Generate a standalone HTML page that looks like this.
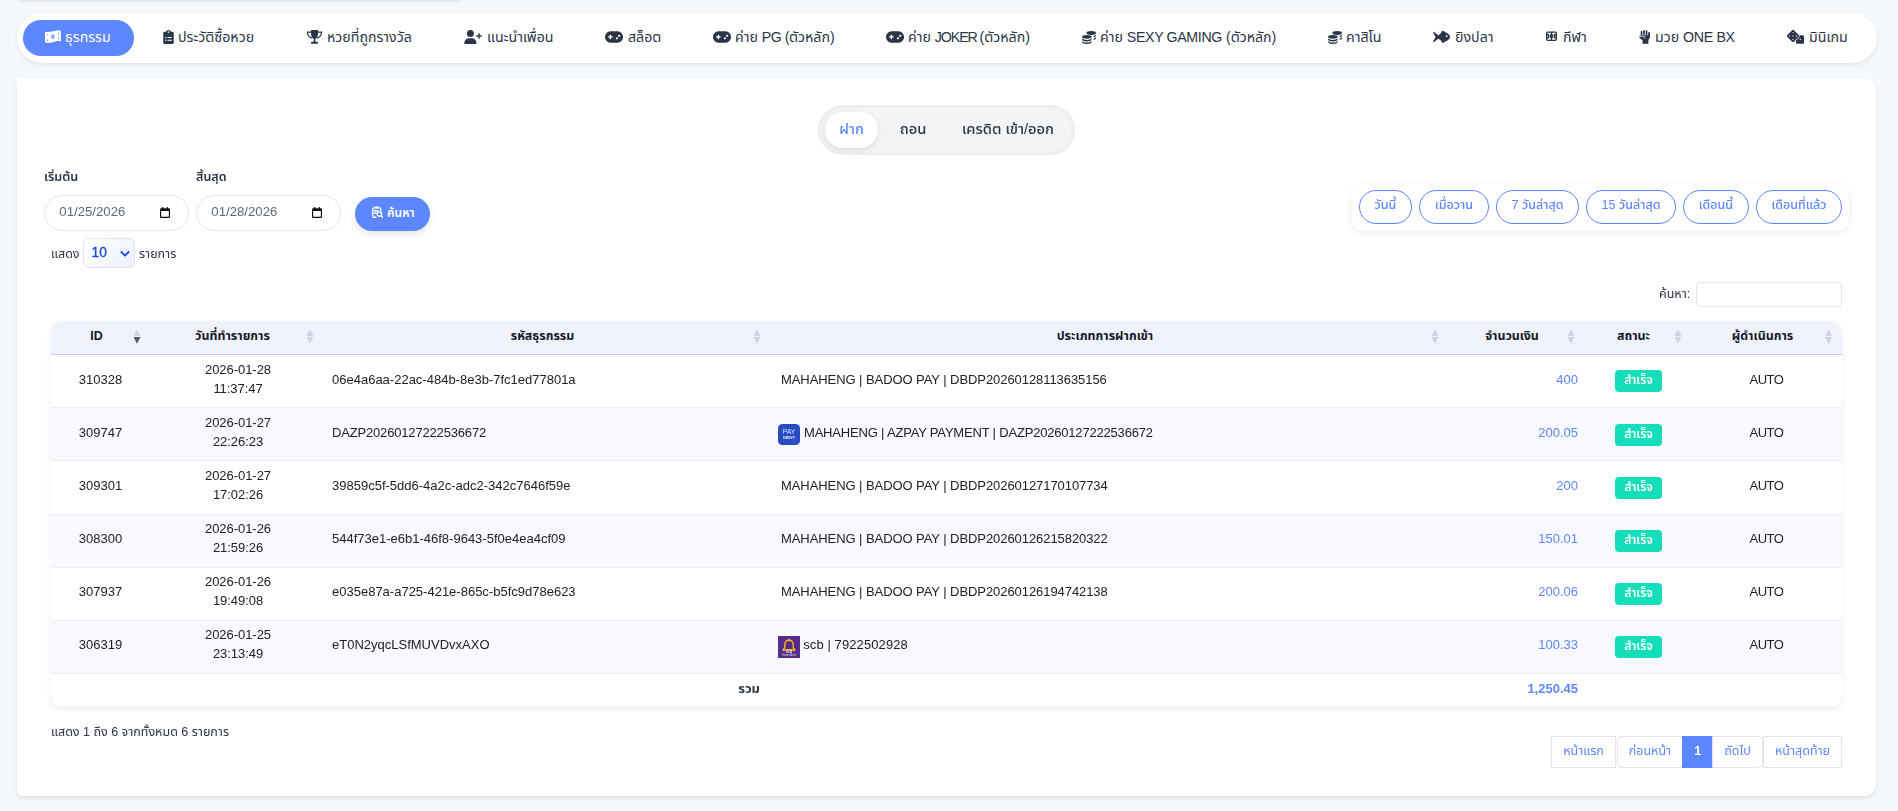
<!DOCTYPE html>
<html lang="th">
<head>
<meta charset="utf-8">
<title>ธุรกรรม</title>
<style>
*{box-sizing:border-box}
html,body{margin:0;padding:0}
body{width:1898px;height:811px;overflow:hidden;background:#f5f8fb;color:#2a3547;
  font-family:"Liberation Sans","Noto Sans Thai","Noto Sans Thai UI","Loma",sans-serif;font-size:13px;position:relative}
.abs{position:absolute}
.tabs,.lbl,.small,.quick,.pg,.date,.sel,.tb2{will-change:transform}
/* top sliver */
.sliver{left:17px;top:-12px;width:445px;height:12px;background:#fff;border-radius:0 0 4px 4px;box-shadow:0 1px 3px rgba(60,80,110,.14)}
/* nav */
.nav{left:17px;top:13px;width:1860px;height:50px;background:#fff;border-radius:25px;box-shadow:0 2px 4px rgba(55,70,85,.11)}
.nav .it{position:absolute;top:7px;height:36px;line-height:34px;padding-bottom:2px;font-size:14.2px;color:#2a3547;white-space:nowrap;display:flex;align-items:center}
.nav .it b{font-weight:400}
.nav .it svg{display:block;margin-right:4px;flex:none}
.nav .it.act{background:#5d87ff;color:#fff;border-radius:18px;left:6px;width:111px;padding-left:21px}
/* card */
.card{left:17px;top:78px;width:1859px;height:718px;background:#fff;border-radius:0 12px 12px 5px;box-shadow:0 2px 4px rgba(55,70,85,.12)}
/* tabs */
.tabs{left:818px;top:105px;width:257px;height:50px;border-radius:25px;background:#f3f4f6;box-shadow:inset 0 0 5px rgba(40,50,70,.10)}
.tabs span{position:absolute;top:7px;height:36px;line-height:35px;font-size:14.7px;font-weight:500;color:#2a3547;text-align:center;white-space:nowrap}
.tabs .on{left:7px;width:53px;background:#fff;border-radius:18px;color:#5d87ff;box-shadow:0 2px 5px rgba(40,50,70,.12)}
/* filters */
.lbl{font-size:12.5px;font-weight:600;color:#2a3547;white-space:nowrap;line-height:16px}
.date{height:36px;width:144.5px;border:1px solid #dfe5ef;border-radius:18px;background:#fff;color:#5a6a85;font-size:13.2px;line-height:32px;padding-left:14.3px;white-space:nowrap}
.date svg{position:absolute;right:17.7px;top:11px}
.btn-s{left:355px;top:197px;width:75px;height:34px;border-radius:17px;background:#5d87ff;color:#fff;font-size:12px;font-weight:600;line-height:33px;white-space:nowrap;box-shadow:0 3px 6px rgba(40,50,70,.13)}
.sel{left:83.2px;top:238px;width:51.7px;height:29.6px;border:1px solid #dfe4f3;border-radius:5px;background:linear-gradient(135deg,#fff 10%,#eef1fd 90%);color:#1d4ed8;font-size:13.8px;-webkit-text-stroke:.35px #1d4ed8;line-height:28px;padding-left:7.5px}
.small{font-size:12.5px;color:#2a3547;white-space:nowrap;line-height:16px}
/* quick */
.quick{left:1352px;top:184px;width:497px;height:47px;border-radius:12px;background:#fff;box-shadow:0 2px 6px rgba(55,70,85,.10)}
.quick span{position:absolute;top:6px;height:34px;line-height:29px;border:1px solid #5d87ff;border-radius:17px;color:#5d87ff;font-size:12.5px;font-weight:500;text-align:center;white-space:nowrap;background:#fff}
.srch{left:1696px;top:282px;width:146px;height:25px;border:1px solid #dfe5ef;border-radius:4px;background:#fff}
/* table */
.tw{left:51px;top:321px;width:1791px;height:386px;border-radius:12px 12px 10px 10px;overflow:hidden;background:#fff;box-shadow:0 2px 5px rgba(90,106,133,.12)}
table{border-collapse:separate;border-spacing:0;table-layout:fixed;width:1791px;font-size:13px;color:#232021}
th{height:33px;background:#f0f3fe;font-weight:700;font-size:12.4px;line-height:19px;color:#111827;text-align:center;vertical-align:top;padding:6px 28px 0 20px;position:relative;white-space:nowrap}
th i{position:absolute;right:9.5px;top:8.4px;width:7px;height:16px}
th:last-child i{right:10px}
th i:before,th i:after{content:"";position:absolute;left:0;width:7px;background:#cfd1e0}
th i:before{top:0;height:6.4px;clip-path:polygon(50% 0,100% 100%,0 100%)}
th i:after{top:7.6px;height:6.8px;clip-path:polygon(0 0,100% 0,50% 100%)}
th i.d:after{background:#5a5c66}
td{height:53px;padding:15px 10px 0;border-top:1px solid #ebeef5;vertical-align:top;line-height:19px;white-space:nowrap}
tbody tr:first-child td{border-top-color:#c5cde6}
tbody tr:nth-child(even) td{background:#f8f9fe}
tr.h54 td{height:54px}
tr.up td{padding-top:14px}
td.c{text-align:center}
td.d{padding:5px 8px 0 11px;letter-spacing:-.05px}
tr.up td.d{padding-top:4px}
td.k{padding-left:9px}
td.t{padding-left:11px;letter-spacing:-.07px}
td.a{letter-spacing:-.5px}
td.r{text-align:right;color:#5d87ff;padding-right:6px}
td.b{padding-top:15px}
tr.p16 td.b{padding-top:16px}
tr.up td.b{padding-top:15px}
.bdg{display:block;margin:0 auto;width:47px;height:21.6px;line-height:21px;border-radius:4px;background:#13deb9;color:#fff;font-weight:600;font-size:12px;text-align:center;position:relative;left:1px}
tfoot td{color:#2a3547;height:34px;padding-top:5px;font-weight:700}
.logo{position:absolute;display:block}
td.lg{position:relative;padding-left:33.2px}
/* pagination */
.pg{top:736px;height:32px;line-height:28px;border:1px solid #dfe5ef;background:#fff;color:#5d87ff;font-size:12.5px;text-align:center;white-space:nowrap}
</style>
</head>
<body>
<div class="abs sliver"></div>
<div class="abs nav">
 <div class="it act"><svg width="17" height="14" viewBox="0 0 17 14"><path fill="#fff" d="M1 2.200C3 1.900 5.500 2.300 8 1.600S13-.2 16.900.8v10.600C13.500 10.600 11.500 11.600 9 12.200s-5 .7-8 .3z"/><ellipse cx="8.900" cy="6.500" rx="1.700" ry="2.300" fill="#5d87ff"/><ellipse cx="8.900" cy="6.500" rx=".55" ry="1.150" fill="#fff"/><circle cx="3.200" cy="4.800" r=".65" fill="#5d87ff"/><circle cx="14.500" cy="3.200" r=".65" fill="#5d87ff"/><circle cx="3.300" cy="10.200" r=".65" fill="#5d87ff"/><circle cx="14.500" cy="8.700" r=".65" fill="#5d87ff"/></svg><span>ธุรกรรม</span></div>
 <div class="it" style="left:146px"><svg width="11" height="14" viewBox="0 0 384 512"><path fill="#2a3547" d="M192 0c-42 0-77 27-90 64H48C21 64 0 85 0 112v352c0 27 21 48 48 48h288c27 0 48-21 48-48V112c0-27-21-48-48-48h-54C269 27 234 0 192 0z"/><circle cx="192" cy="80" r="30" fill="#fff"/><circle cx="96" cy="272" r="26" fill="#fff"/><circle cx="96" cy="376" r="26" fill="#fff"/><rect x="152" y="254" width="168" height="36" rx="18" fill="#fff"/><rect x="152" y="358" width="168" height="36" rx="18" fill="#fff"/></svg><span>ประวัติซื้อหวย</span></div>
 <div class="it" style="left:289px"><svg width="17" height="14" viewBox="0 0 576 512"><path fill="#2a3547" d="M158 24c0-14 10-24 24-24h212c14 0 24 10 24 24v72c0 130-52 220-130 244-78-24-130-114-130-244z"/><path fill="none" stroke="#2a3547" stroke-width="44" d="M160 74H30c0 112 62 192 168 224M416 74h130c0 112-62 192-168 224"/><rect x="256" y="320" width="64" height="120" fill="#2a3547"/><rect x="160" y="432" width="256" height="72" rx="28" fill="#2a3547"/></svg><span>หวยที่ถูกรางวัล</span></div>
 <div class="it" style="left:447px"><svg width="18" height="14" viewBox="0 0 640 512"><circle cx="224" cy="128" r="128" fill="#2a3547"/><path fill="#2a3547" d="M0 482c0-98 80-178 178-178h92c98 0 178 80 178 178 0 16-14 30-30 30H30c-16 0-30-14-30-30z"/><rect x="443" y="193" width="197" height="52" rx="10" fill="#2a3547"/><rect x="515" y="121" width="52" height="197" rx="10" fill="#2a3547"/></svg><span style="margin-left:1px">แนะนำเพื่อน</span></div>
 <div class="it" style="left:588px"><svg width="18" height="14" viewBox="0 0 640 498"><rect x="0" y="48" width="640" height="402" rx="190" fill="#2a3547"/><rect x="112" y="226" width="160" height="46" rx="20" fill="#fff"/><rect x="169" y="169" width="46" height="160" rx="20" fill="#fff"/><circle cx="424" cy="296" r="40" fill="#fff"/><circle cx="504" cy="208" r="40" fill="#fff"/></svg><span style="margin-left:1px">สล็อต</span></div>
 <div class="it" style="left:696px"><svg width="18" height="14" viewBox="0 0 640 498"><rect x="0" y="48" width="640" height="402" rx="190" fill="#2a3547"/><rect x="112" y="226" width="160" height="46" rx="20" fill="#fff"/><rect x="169" y="169" width="46" height="160" rx="20" fill="#fff"/><circle cx="424" cy="296" r="40" fill="#fff"/><circle cx="504" cy="208" r="40" fill="#fff"/></svg><span>ค่าย <b class="en" style="letter-spacing:-.5px">PG (</b>ตัวหลัก)</span></div>
 <div class="it" style="left:869px"><svg width="18" height="14" viewBox="0 0 640 498"><rect x="0" y="48" width="640" height="402" rx="190" fill="#2a3547"/><rect x="112" y="226" width="160" height="46" rx="20" fill="#fff"/><rect x="169" y="169" width="46" height="160" rx="20" fill="#fff"/><circle cx="424" cy="296" r="40" fill="#fff"/><circle cx="504" cy="208" r="40" fill="#fff"/></svg><span>ค่าย <b class="en" style="letter-spacing:-1.1px">JOKER </b>(ตัวหลัก)</span></div>
 <div class="it" style="left:1064px"><svg width="14" height="13" style="margin-left:1px" viewBox="0 0 512 480"><g fill="#2a3547"><ellipse cx="336" cy="72" rx="176" ry="72"/><path d="M512 130v40c0 26-30 50-80 62v-52c36-10 64-28 80-50z"/><path d="M512 226v40c0 26-30 50-80 62v-52c36-10 64-28 80-50z"/><ellipse cx="176" cy="216" rx="176" ry="72"/><path d="M0 272c30 40 100 60 176 60s146-20 176-60v44c0 40-78 72-176 72S0 356 0 316z"/><path d="M0 366c30 40 100 60 176 60s146-20 176-60v42c0 40-78 72-176 72S0 448 0 408z"/></g></svg><span>ค่าย <b class="en" style="letter-spacing:-.36px">SEXY GAMING</b> (ตัวหลัก)</span></div>
 <div class="it" style="left:1310px"><svg width="14" height="13" style="margin-left:1px" viewBox="0 0 512 480"><g fill="#2a3547"><ellipse cx="336" cy="72" rx="176" ry="72"/><path d="M512 130v40c0 26-30 50-80 62v-52c36-10 64-28 80-50z"/><path d="M512 226v40c0 26-30 50-80 62v-52c36-10 64-28 80-50z"/><ellipse cx="176" cy="216" rx="176" ry="72"/><path d="M0 272c30 40 100 60 176 60s146-20 176-60v44c0 40-78 72-176 72S0 356 0 316z"/><path d="M0 366c30 40 100 60 176 60s146-20 176-60v42c0 40-78 72-176 72S0 448 0 408z"/></g></svg><span>คาสิโน</span></div>
 <div class="it" style="left:1416px"><svg width="17" height="14" viewBox="0 0 17 14"><g fill="#2a3547"><path d="M.2 2.700c-.3-.6.400-1.100.9-.7L6.300 6.100v1.800L1.100 12c-.5.400-1.200-.1-.9-.7L2.600 7z"/><path d="M4.500 7C6 3.900 8.800 2.600 11.300 2.600 14.600 2.600 17 5.400 17 7s-2.400 4.400-5.700 4.400C8.800 11.400 6 10.100 4.500 7z"/><path d="M7.500 3.500L9.300.8c1.500.2 2.900 1 3.700 2.300zM8 10.600l1.500 2.500c1.100-.2 2-.9 2.600-1.900z"/></g><circle cx="13.700" cy="6.200" r=".9" fill="#fff"/></svg><span style="margin-left:1px">ยิงปลา</span></div>
 <div class="it" style="left:1528px"><svg width="13" height="14" viewBox="0 0 13 14" style="margin-right:5px"><g fill="none" stroke="#2a3547" stroke-width="1.300"><rect x="1.650" y="2.150" width="9.700" height="8.200" rx="1"/><path d="M6.500 2.100v8.300M1.600 4.700h1.700v3.100H1.600M11.400 4.700H9.700v3.100h1.700"/><circle cx="6.500" cy="6.250" r="1.500"/></g></svg><span>กีฬา</span></div>
 <div class="it" style="left:1622px"><svg width="12" height="14" viewBox="0 0 12 14"><g fill="#2a3547"><rect x="1.700" y=".9" width="1.700" height="4.500" rx=".8"/><rect x="4.150" y="0" width="1.700" height="5" rx=".8"/><rect x="6.700" y=".3" width="1.700" height="5" rx=".8"/><rect x="9.150" y="1.900" width="1.850" height="6" rx=".9"/><path d="M2.200 5.300h8.200V8c0 1-.5 1.600-1.100 1.900H3.500C1.900 9.500.4 8.100.4 6.700c0-.9.700-1.300 1.800-1.400z"/><rect x="3.500" y="9.500" width="5.900" height="4.300" rx=".4"/></g><path d="M.8 6.600c1.600-.5 3.900-.4 4.700 0 .8.500.5 1.600-.6 1.900" fill="none" stroke="#fff" stroke-width=".75"/></svg><span>มวย <b class="en" style="letter-spacing:-.33px">ONE BX</b></span></div>
 <div class="it" style="left:1770px"><svg width="18" height="14" viewBox="0 0 18 14" style="overflow:visible"><rect x="8.800" y="5.300" width="8.300" height="8.500" rx="1.500" fill="#2a3547"/><rect x="1.300" y="1.200" width="9.400" height="9.400" rx="1.600" transform="rotate(45 6 5.900)" fill="#2a3547" stroke="#fff" stroke-width="1.300" paint-order="stroke"/><g fill="#fff"><circle cx="6" cy="2.500" r=".62"/><circle cx="2.600" cy="5.900" r=".62"/><circle cx="6" cy="5.900" r=".62"/><circle cx="9.400" cy="5.900" r=".62"/><circle cx="6" cy="9.300" r=".62"/><circle cx="13.300" cy="9.400" r=".7"/></g></svg><span>มินิเกม</span></div>
</div>
<div class="abs card"></div>
<div class="abs tabs"><span class="on">ฝาก</span><span style="left:67px;width:56px">ถอน</span><span style="left:130px;width:120px">เครดิต เข้า/ออก</span></div>

<div class="abs lbl" style="left:44px;top:169px">เริ่มต้น</div>
<div class="abs lbl" style="left:196px;top:169px">สิ้นสุด</div>
<div class="abs date" style="left:44px;top:195px">01/25/2026<svg width="10" height="11" viewBox="0 0 12 13"><path fill="#111" d="M2.6 0h1.5v1.4h3.8V0h1.5v1.4h1.1c.8 0 1.5.7 1.5 1.5v8.6c0 .8-.7 1.5-1.500 1.500h-9c-.8 0-1.500-.7-1.500-1.500V2.900c0-.8.7-1.500 1.500-1.500h1.100zM1.400 4.800v6.700h9.200V4.800z"/></svg></div>
<div class="abs date" style="left:196px;top:195px">01/28/2026<svg width="10" height="11" viewBox="0 0 12 13"><path fill="#111" d="M2.6 0h1.5v1.4h3.8V0h1.5v1.4h1.1c.8 0 1.5.7 1.5 1.5v8.6c0 .8-.7 1.5-1.500 1.500h-9c-.8 0-1.500-.7-1.500-1.500V2.900c0-.8.7-1.500 1.500-1.500h1.100zM1.400 4.800v6.700h9.200V4.800z"/></svg></div>
<div class="abs btn-s"><svg class="abs" style="left:16.5px;top:9px" width="11.500" height="12" viewBox="0 0 11.500 12"><g fill="none" stroke="#fff" stroke-width="1.350"><path d="M4.200 11.200H1.900c-.6 0-1.100-.5-1.100-1.100V2.900c0-.6.500-1.100 1.100-1.100h5.700c.6 0 1.100.5 1.100 1.100v1.800"/><circle cx="7.400" cy="8" r="2.250"/><path d="M9.100 9.800l1.900 1.900M2.600 4.700h3.200M2.600 7h1.500" stroke-linecap="round"/></g><rect x="3" y=".2" width="3.500" height="2.300" rx=".9" fill="#fff"/></svg><span class="abs" style="left:32px;top:0">ค้นหา</span></div>

<div class="abs small" style="left:51px;top:246px">แสดง</div>
<div class="abs sel">10<svg class="abs" style="right:3.7px;top:10.5px" width="10" height="8" viewBox="0 0 11 8"><path d="M1.500 1.800l4 4 4-4" fill="none" stroke="#1d4ed8" stroke-width="2" stroke-linecap="round" stroke-linejoin="round"/></svg></div>
<div class="abs small" style="left:138.5px;top:246px">รายการ</div>

<div class="abs quick">
 <span style="left:7px;width:53px">วันนี้</span>
 <span style="left:67px;width:70px">เมื่อวาน</span>
 <span style="left:144px;width:83px">7 วันล่าสุด</span>
 <span style="left:234px;width:90px">15 วันล่าสุด</span>
 <span style="left:331px;width:66px">เดือนนี้</span>
 <span style="left:404px;width:86px">เดือนที่แล้ว</span>
</div>

<div class="abs small" style="left:1658.5px;top:286px">ค้นหา:</div>
<div class="abs srch"></div>

<div class="abs tw">
<table>
<colgroup><col style="width:99px"><col style="width:173px"><col style="width:447px"><col style="width:678px"><col style="width:136px"><col style="width:107px"><col style="width:151px"></colgroup>
<thead><tr><th>ID<i class="d"></i></th><th>วันที่ทำรายการ<i></i></th><th>รหัสธุรกรรม<i></i></th><th>ประเภทการฝากเข้า<i></i></th><th>จำนวนเงิน<i></i></th><th>สถานะ<i></i></th><th>ผู้ดำเนินการ<i></i></th></tr></thead>
</table>
<table class="tb2">
<colgroup><col style="width:99px"><col style="width:173px"><col style="width:447px"><col style="width:678px"><col style="width:136px"><col style="width:107px"><col style="width:151px"></colgroup>
<tbody>
<tr><td class="c">310328</td><td class="c d">2026-01-28<br>11:37:47</td><td class="k">06e4a6aa-22ac-484b-8e3b-7fc1ed77801a</td><td class="t">MAHAHENG | BADOO PAY | DBDP20260128113635156</td><td class="r">400</td><td class="c b"><span class="bdg">สำเร็จ</span></td><td class="c a">AUTO</td></tr>
<tr class="p16"><td class="c">309747</td><td class="c d">2026-01-27<br>22:26:23</td><td class="k" style="letter-spacing:-.17px">DAZP20260127222536672</td><td class="t lg" style="letter-spacing:-.19px;padding-left:34px"><svg class="logo" style="left:8px;top:16px" width="22" height="21" preserveAspectRatio="none" viewBox="0 0 22 22"><rect width="22" height="22" rx="4.500" fill="#254cc0"/><text x="11" y="10.500" font-size="7" font-family="Liberation Sans,sans-serif" fill="#dfe6ff" text-anchor="middle">PAY</text><text x="11" y="16" font-size="4.500" font-weight="700" font-family="Liberation Sans,sans-serif" fill="#dfe6ff" text-anchor="middle">MENT</text></svg>MAHAHENG | AZPAY PAYMENT | DAZP20260127222536672</td><td class="r">200.05</td><td class="c b"><span class="bdg">สำเร็จ</span></td><td class="c a">AUTO</td></tr>
<tr class="h54 p16"><td class="c">309301</td><td class="c d">2026-01-27<br>17:02:26</td><td class="k">39859c5f-5dd6-4a2c-adc2-342c7646f59e</td><td class="t">MAHAHENG | BADOO PAY | DBDP20260127170107734</td><td class="r">200</td><td class="c b"><span class="bdg">สำเร็จ</span></td><td class="c a">AUTO</td></tr>
<tr class="up"><td class="c">308300</td><td class="c d">2026-01-26<br>21:59:26</td><td class="k">544f73e1-e6b1-46f8-9643-5f0e4ea4cf09</td><td class="t">MAHAHENG | BADOO PAY | DBDP20260126215820322</td><td class="r">150.01</td><td class="c b"><span class="bdg">สำเร็จ</span></td><td class="c a">AUTO</td></tr>
<tr class="up"><td class="c">307937</td><td class="c d">2026-01-26<br>19:49:08</td><td class="k">e035e87a-a725-421e-865c-b5fc9d78e623</td><td class="t">MAHAHENG | BADOO PAY | DBDP20260126194742138</td><td class="r">200.06</td><td class="c b"><span class="bdg">สำเร็จ</span></td><td class="c a">AUTO</td></tr>
<tr class="up"><td class="c">306319</td><td class="c d">2026-01-25<br>23:13:49</td><td class="k">eT0N2yqcLSfMUVDvxAXO</td><td class="t lg" style="letter-spacing:.1px"><svg class="logo" style="left:8px;top:15px" width="22" height="22" viewBox="0 0 22 22"><rect width="22" height="22" fill="#542c8c"/><path d="M11 4.300c-2.700 0-4.200 2.300-4.200 4.900 0 1.500.3 2.300-.3 3.100-.6.700-1.300.8-1.300 1.500 0 .6.600.9 1.200.7.700-.2 1-.8 1-.8h7.200s.3.600 1 .8c.6.200 1.200-.1 1.200-.7 0-.7-.7-.8-1.300-1.500-.6-.8-.3-1.600-.3-3.100 0-2.600-1.500-4.900-4.200-4.900z" fill="none" stroke="#fdb515" stroke-width="1.400" stroke-linejoin="round"/><circle cx="11" cy="3.600" r=".9" fill="#fdb515"/><text x="11" y="17.300" font-size="2.800" font-weight="700" font-family="Liberation Sans,sans-serif" fill="#fff" text-anchor="middle">SCB</text><text x="11" y="20.400" font-size="2.800" font-family="Liberation Sans,Noto Sans Thai,sans-serif" fill="#e9def7" text-anchor="middle">ไทยพาณิชย์</text></svg>scb | 7922502928</td><td class="r">100.33</td><td class="c b"><span class="bdg">สำเร็จ</span></td><td class="c a">AUTO</td></tr>
</tbody>
<tfoot><tr><td colspan="3" style="text-align:right">รวม</td><td></td><td class="r">1,250.45</td><td></td><td></td></tr></tfoot>
</table>
</div>

<div class="abs small" style="left:51px;top:724px">แสดง 1 ถึง 6 จากทั้งหมด 6 รายการ</div>
<div class="abs pg" style="left:1551px;width:65px">หน้าแรก</div>
<div class="abs pg" style="left:1616.7px;width:66px;border-radius:5px 0 0 5px">ก่อนหน้า</div>
<div class="abs pg" style="left:1682px;width:31.5px;background:#5d87ff;border-color:#5d87ff;color:#fff;font-weight:600">1</div>
<div class="abs pg" style="left:1712px;width:51px;border-radius:0 5px 5px 0">ถัดไป</div>
<div class="abs pg" style="left:1763px;width:79px">หน้าสุดท้าย</div>
</body>
</html>
